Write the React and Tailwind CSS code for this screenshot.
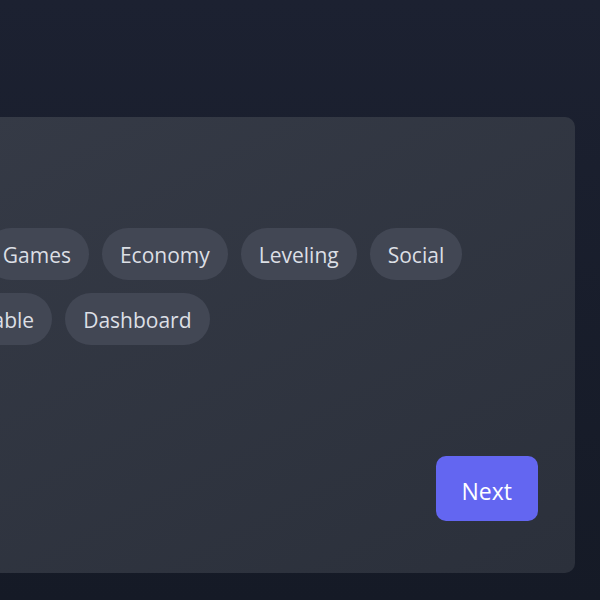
import React, { useState } from 'react';

const rowOne = ['Fun', 'Music', 'Games', 'Economy', 'Leveling', 'Social'];
const rowTwo = ['Utility', 'Customizable', 'Dashboard'];

const Chip = ({ label, active, onClick }) => (
  <button
    onClick={onClick}
    className={`h-[52px] px-[18px] pt-[4px] rounded-full text-[21px] whitespace-nowrap ${active ? 'bg-[#6366f1] text-white' : 'bg-[#424754] text-[#dcdfe5]'}`}
  >
    {label}
  </button>
);

const App = () => {
  const [picked, setPicked] = useState([]);

  const toggle = (label) => {
    setPicked((prev) => (prev.includes(label) ? prev.filter((p) => p !== label) : [...prev, label]));
  };

  return (
    <div
      className="h-screen overflow-hidden bg-gradient-to-b from-[#1c2131] to-[#151a26] pt-[117px]"
      style={{ fontFamily: '"Open Sans", "Noto Sans", sans-serif' }}
    >
      {/* Card, its left part runs off the page */}
      <div className="ml-[-300px] w-[875px] h-[456px] rounded-[10px] bg-gradient-to-br from-[#373c48] to-[#2b303b] flex flex-col pl-[85px] pr-[37px] pt-[111px] pb-[52px]">
        {/* Chip rows */}
        <div className="flex flex-col gap-[13px]">
          <div className="flex gap-[13px] ml-[8px]">
            {rowOne.map((label) => (
              <Chip key={label} label={label} active={picked.includes(label)} onClick={() => toggle(label)} />
            ))}
          </div>
          <div className="flex gap-[13px] ml-[-7px]">
            {rowTwo.map((label) => (
              <Chip key={label} label={label} active={picked.includes(label)} onClick={() => toggle(label)} />
            ))}
          </div>
        </div>

        <div className="flex-1" />

        <div className="flex justify-end">
          <button className="h-[65px] px-[26px] pt-[5px] rounded-[10px] bg-[#6366f1] text-white text-[23px]">
            Next
          </button>
        </div>
      </div>
    </div>
  );
};

export default App;
